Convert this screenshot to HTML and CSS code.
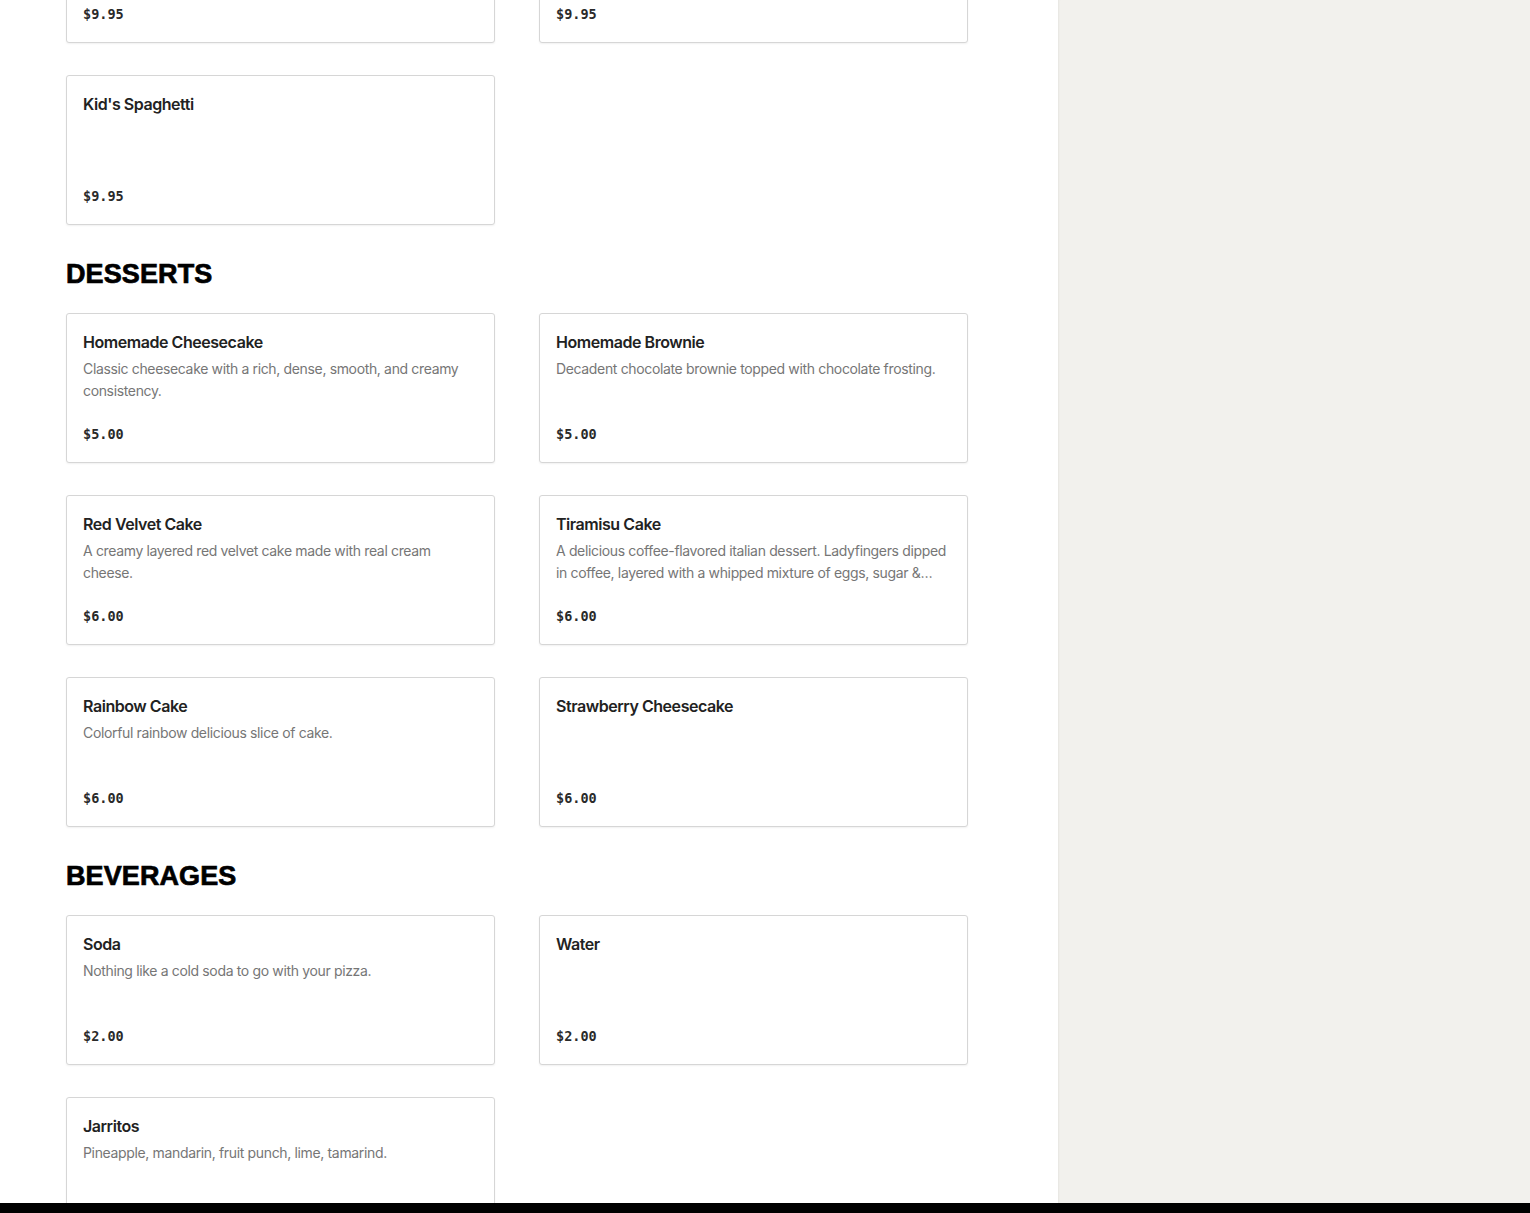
FILE: index.html
```html
<!DOCTYPE html>
<html lang="en">
<head>
    <meta charset="UTF-8">
    <meta name="viewport" content="width=device-width, initial-scale=1.0">
    <title>Menu</title>
    <link rel="stylesheet" href="styles.css">
</head>
<body>
    <div class="Page">
        <main class="Menu">
            <section class="Menu-section Menu-section--scrolled">
                <div class="Menu-grid">
                    <div class="Menu-item">
                        <h3 class="Menu-itemName">Kid's Pizza</h3>
                        <span class="Menu-itemPrice">$9.95</span>
                    </div>
                    <div class="Menu-item">
                        <h3 class="Menu-itemName">Kid's Chicken Tenders</h3>
                        <span class="Menu-itemPrice">$9.95</span>
                    </div>
                    <div class="Menu-item">
                        <h3 class="Menu-itemName">Kid's Spaghetti</h3>
                        <span class="Menu-itemPrice">$9.95</span>
                    </div>
                </div>
            </section>

            <section class="Menu-section">
                <h2 class="Menu-heading">DESSERTS</h2>
                <div class="Menu-grid">
                    <div class="Menu-item">
                        <h3 class="Menu-itemName">Homemade Cheesecake</h3>
                        <p class="Menu-itemDesc">Classic cheesecake with a rich, dense, smooth, and creamy consistency.</p>
                        <span class="Menu-itemPrice">$5.00</span>
                    </div>
                    <div class="Menu-item">
                        <h3 class="Menu-itemName">Homemade Brownie</h3>
                        <p class="Menu-itemDesc">Decadent chocolate brownie topped with chocolate frosting.</p>
                        <span class="Menu-itemPrice">$5.00</span>
                    </div>
                    <div class="Menu-item">
                        <h3 class="Menu-itemName">Red Velvet Cake</h3>
                        <p class="Menu-itemDesc">A creamy layered red velvet cake made with real cream cheese.</p>
                        <span class="Menu-itemPrice">$6.00</span>
                    </div>
                    <div class="Menu-item">
                        <h3 class="Menu-itemName">Tiramisu Cake</h3>
                        <p class="Menu-itemDesc">A delicious coffee-flavored italian dessert. Ladyfingers dipped in coffee, layered with a whipped mixture of eggs, sugar &amp; mascarpone cheese, flavored with cocoa.</p>
                        <span class="Menu-itemPrice">$6.00</span>
                    </div>
                    <div class="Menu-item">
                        <h3 class="Menu-itemName">Rainbow Cake</h3>
                        <p class="Menu-itemDesc">Colorful rainbow delicious slice of cake.</p>
                        <span class="Menu-itemPrice">$6.00</span>
                    </div>
                    <div class="Menu-item">
                        <h3 class="Menu-itemName">Strawberry Cheesecake</h3>
                        <span class="Menu-itemPrice">$6.00</span>
                    </div>
                </div>
            </section>

            <section class="Menu-section">
                <h2 class="Menu-heading">BEVERAGES</h2>
                <div class="Menu-grid">
                    <div class="Menu-item">
                        <h3 class="Menu-itemName">Soda</h3>
                        <p class="Menu-itemDesc">Nothing like a cold soda to go with your pizza.</p>
                        <span class="Menu-itemPrice">$2.00</span>
                    </div>
                    <div class="Menu-item">
                        <h3 class="Menu-itemName">Water</h3>
                        <span class="Menu-itemPrice">$2.00</span>
                    </div>
                    <div class="Menu-item">
                        <h3 class="Menu-itemName">Jarritos</h3>
                        <p class="Menu-itemDesc">Pineapple, mandarin, fruit punch, lime, tamarind.</p>
                        <span class="Menu-itemPrice">$3.00</span>
                    </div>
                </div>
            </section>
        </main>
        <aside class="Sidebar"></aside>
    </div>
    <div class="BottomBar"></div>
</body>
</html>
```

FILE: styles.css
```css
* {
    margin: 0;
    padding: 0;
    box-sizing: border-box;
}

html, body {
    height: 100%;
    overflow: hidden;
    font-family: 'Inter', 'Liberation Sans', sans-serif;
    background: #ffffff;
    color: #1f1f1f;
}

body {
    display: flex;
    flex-direction: column;
}

.Page {
    flex: 1;
    display: flex;
    min-height: 0;
}

.Menu {
    width: 1058px;
    flex-shrink: 0;
    overflow: hidden;
    padding: 0 90px 0 66px;
}

.Menu-section--scrolled {
    margin-top: -107px;
}

.Menu-heading {
    font-family: 'Liberation Sans', 'DejaVu Sans', sans-serif;
    font-weight: 900;
    font-size: 27px;
    line-height: 36px;
    letter-spacing: 0.1px;
    color: #000000;
    margin: 31px 0 21px;
    -webkit-text-stroke: 0.7px #000000;
}

.Menu-grid {
    display: grid;
    grid-template-columns: 429px 429px;
    column-gap: 44px;
    row-gap: 32px;
}

.Menu-item {
    height: 150px;
    display: flex;
    flex-direction: column;
    padding: 16px 16px 16px;
    border: 1px solid #d6d6d6;
    border-radius: 3px;
    box-shadow: 0 1px 2px rgba(0, 0, 0, 0.06);
    background: #ffffff;
}

.Menu-itemName {
    font-size: 16px;
    font-weight: 600;
    line-height: 24px;
    letter-spacing: -0.45px;
    color: #222222;
}

.Menu-itemDesc {
    margin-top: 4px;
    font-size: 14px;
    line-height: 22px;
    letter-spacing: -0.35px;
    color: #767676;
    display: -webkit-box;
    -webkit-line-clamp: 2;
    -webkit-box-orient: vertical;
    overflow: hidden;
}

.Menu-itemPrice {
    margin-top: auto;
    font-family: 'DejaVu Sans Mono', 'Liberation Mono', monospace;
    font-size: 13.5px;
    font-weight: 700;
    line-height: 24px;
    color: #2a2a2a;
}

.Sidebar {
    flex: 1;
    background: #f2f1ed;
    box-shadow: inset 2px 0 2px -1px rgba(0, 0, 0, 0.05);
}

.BottomBar {
    height: 10px;
    background: #000000;
}
```
